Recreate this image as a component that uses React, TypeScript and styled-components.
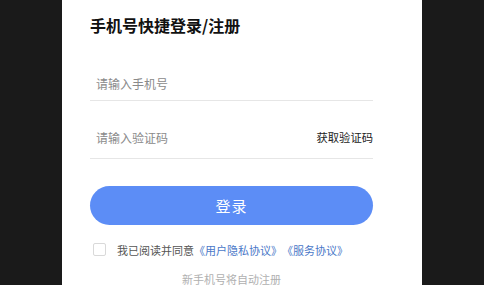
import React from "react";
import styled, { createGlobalStyle } from "styled-components";

const Global = createGlobalStyle`
  html, body { margin: 0; padding: 0; background: #1a1a1a; }
  body {
    font-family: "Noto Sans CJK SC", "Noto Sans", sans-serif;
    overflow: hidden;
    text-spacing-trim: space-all;
  }
  * { box-sizing: border-box; }
`;

const Page = styled.div`
  display: flex;
  justify-content: center;
  align-items: flex-start;
  height: 285px;
  overflow: hidden;
`;

const Panel = styled.div`
  width: 360px;
  min-height: 285px;
  background: #ffffff;
  padding: 13px 49px 0 28px;
  display: flex;
  flex-direction: column;
  flex: none;
  & > * { flex-shrink: 0; }
`;

const Title = styled.h1`
  margin: 0;
  font-size: 16px;
  line-height: 24px;
  font-weight: 700;
  color: #111;
`;

const Row = styled.div<{ $h: number; $mt: number }>`
  display: flex;
  align-items: center;
  justify-content: space-between;
  height: ${(p) => p.$h}px;
  margin-top: ${(p) => p.$mt}px;
  border-bottom: 1px solid #e6e6e6;
  padding-left: 6px;
`;

const Input = styled.input`
  border: none;
  outline: none;
  padding: 0;
  flex: 1;
  min-width: 0;
  font-family: inherit;
  font-size: 12px;
  color: #333;
  background: transparent;
  &::placeholder { color: #8a8a8a; }
`;

const CodeButton = styled.button`
  border: none;
  background: none;
  padding: 0;
  font-family: inherit;
  font-size: 11.3px;
  color: #222;
  cursor: pointer;
`;

const LoginButton = styled.button`
  margin-top: 27px;
  height: 39px;
  border: none;
  border-radius: 20px;
  background: #5c8df6;
  color: #fff;
  font-family: inherit;
  font-size: 15px;
  letter-spacing: 1px;
  cursor: pointer;
`;

const Agree = styled.label`
  display: flex;
  align-items: center;
  margin-top: 18px;
  padding-left: 3px;
  height: 13px;
  font-size: 11px;
  color: #555;
  white-space: nowrap;
  text-spacing-trim: space-all;
`;

const Box = styled.span`
  width: 13px;
  height: 13px;
  border: 1px solid #d9d9d9;
  border-radius: 2px;
  margin-right: 11px;
  flex: none;
`;

const Link = styled.span`
  color: #4a78c8;
`;

const Hint = styled.div`
  margin-top: 15px;
  text-align: center;
  font-size: 11px;
  line-height: 16px;
  color: #b0b0b0;
`;

export default function App() {
  return (
    <>
      <Global />
      <Page>
        <Panel>
          <Title>手机号快捷登录/注册</Title>
          <Row $h={34} $mt={30}>
            <Input placeholder="请输入手机号" />
          </Row>
          <Row $h={43} $mt={15}>
            <Input placeholder="请输入验证码" />
            <CodeButton>获取验证码</CodeButton>
          </Row>
          <LoginButton>登录</LoginButton>
          <Agree>
            <Box />
            我已阅读并同意<Link>《用户隐私协议》《服务协议》</Link>
          </Agree>
          <Hint>新手机号将自动注册</Hint>
        </Panel>
      </Page>
    </>
  );
}
